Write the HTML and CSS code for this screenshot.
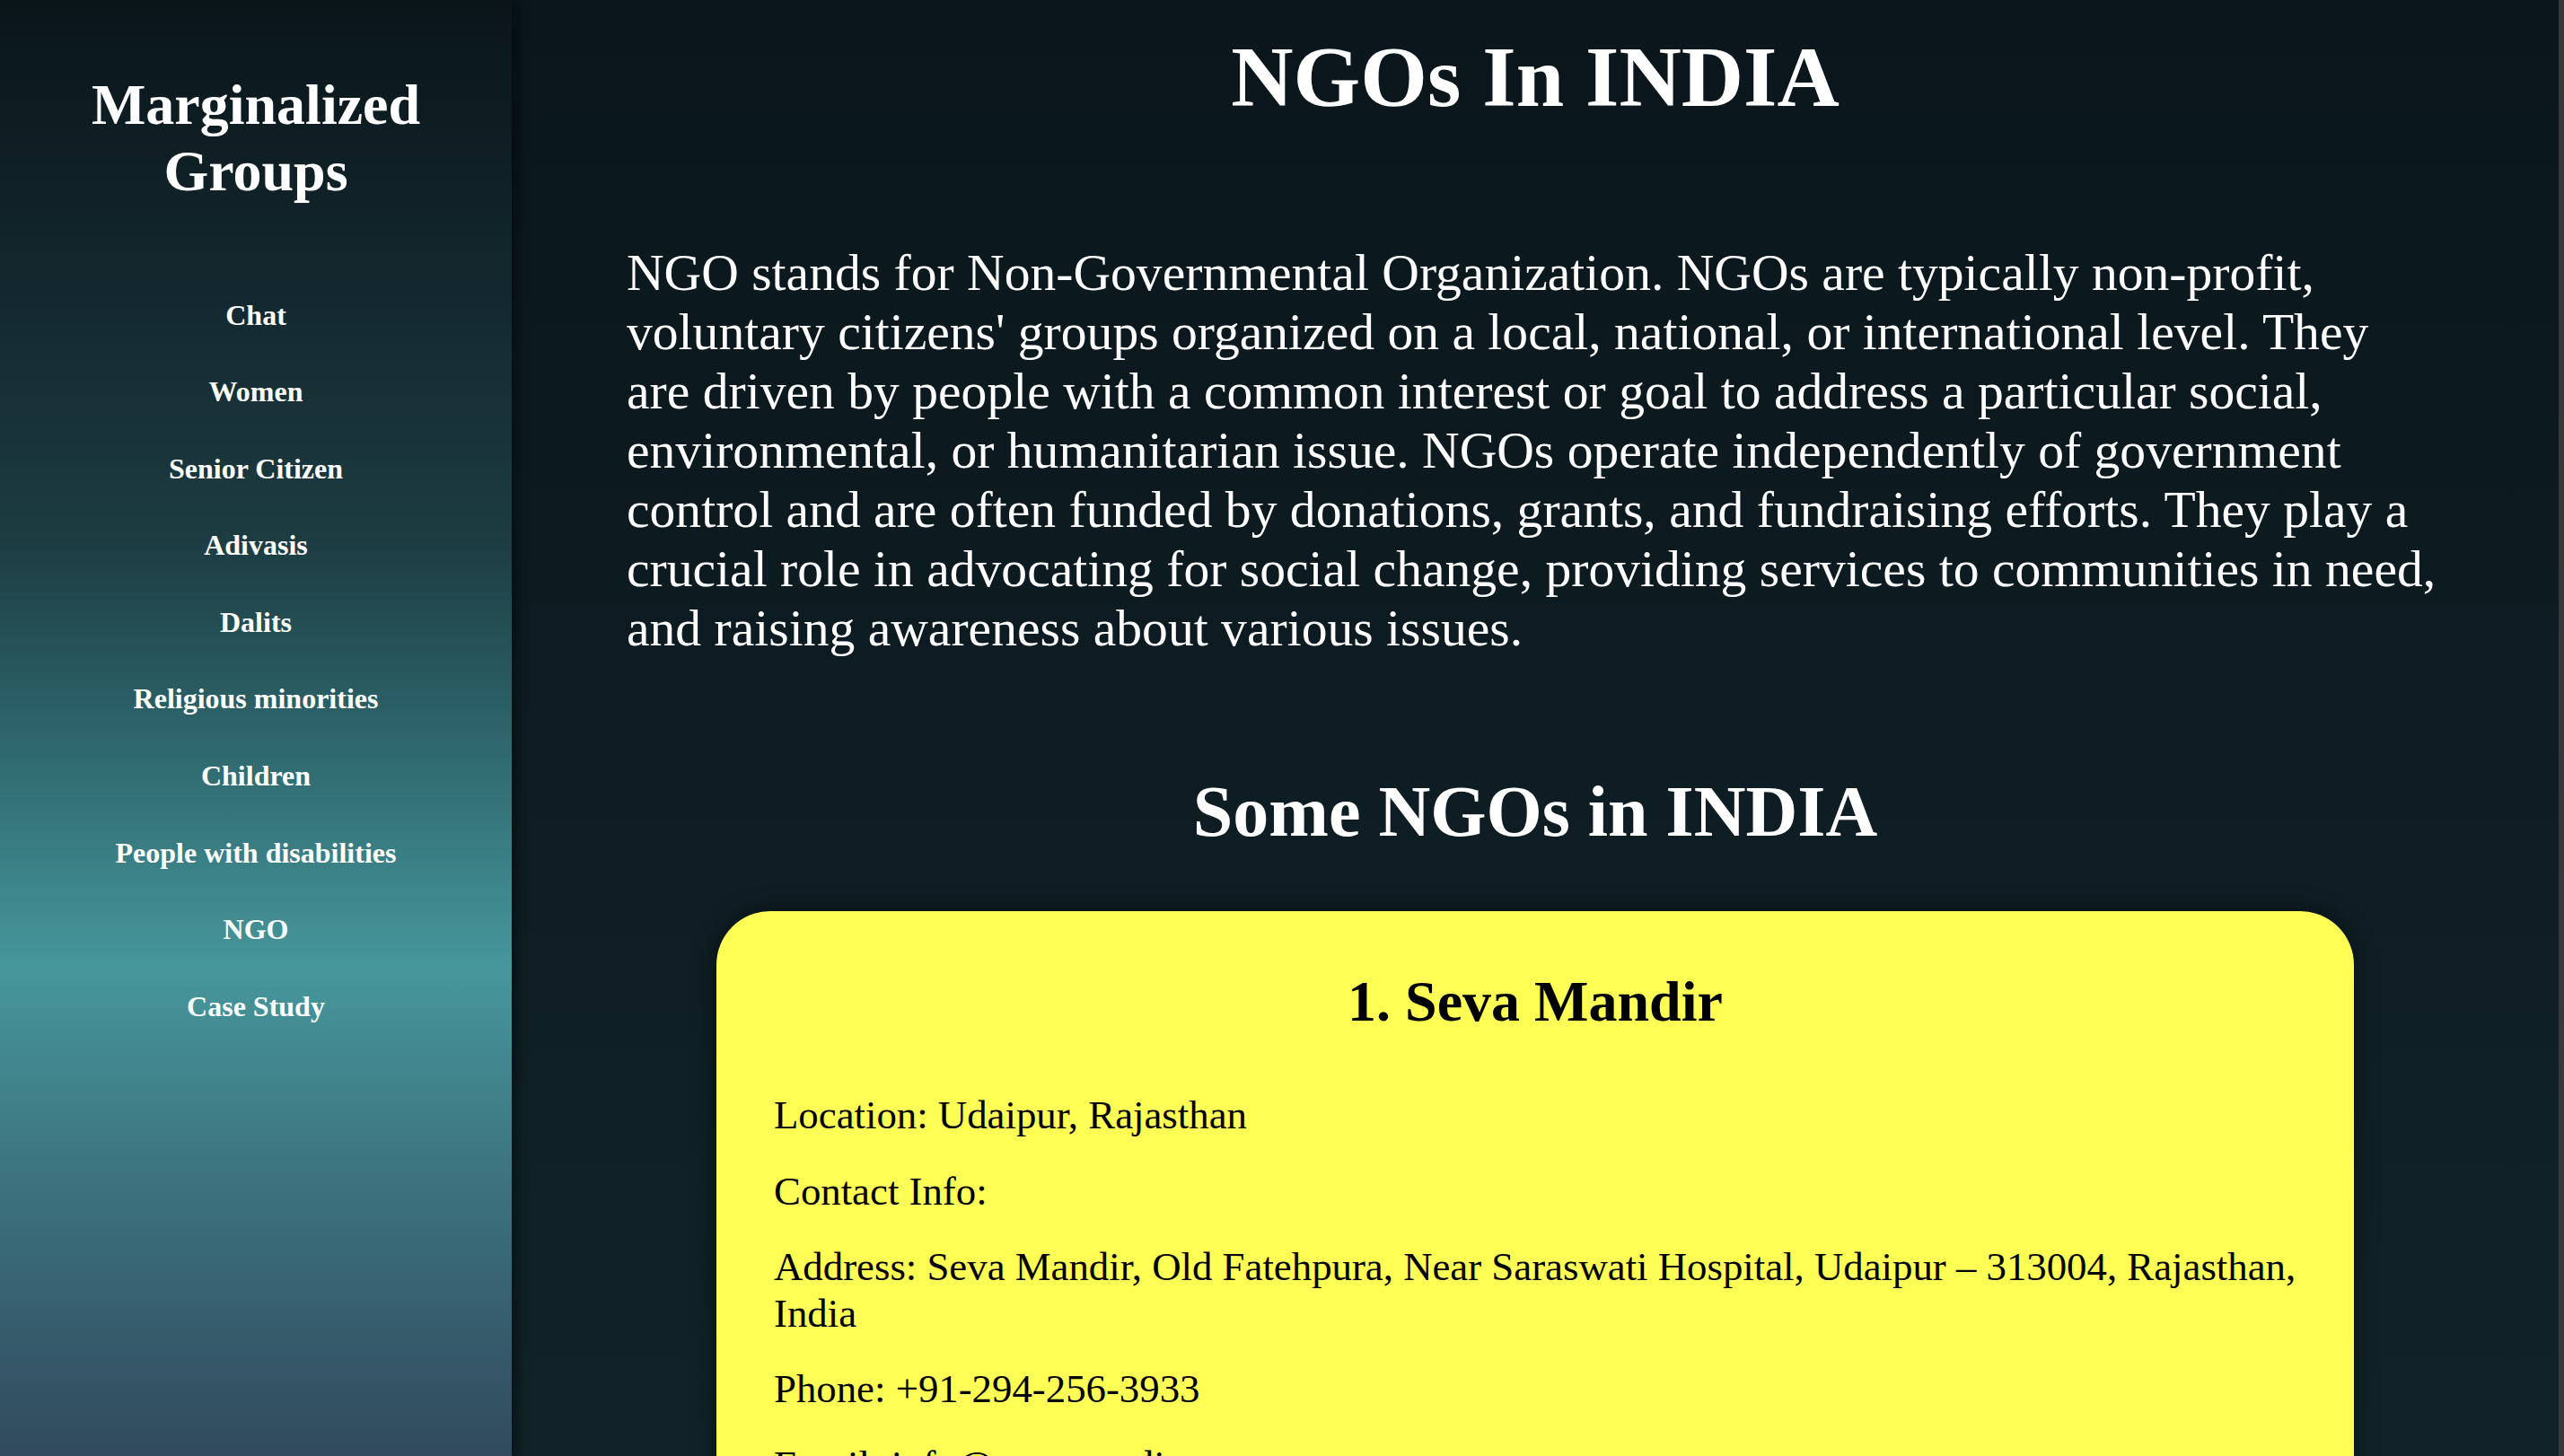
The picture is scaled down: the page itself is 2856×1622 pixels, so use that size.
FILE: index.html
```html
<!DOCTYPE html>
<html lang="en">
<head>
<meta charset="utf-8">
<title>NGOs In INDIA</title>
<link rel="stylesheet" href="styles.css">
</head>
<body>
<div class="page">
  <aside class="sidebar">
    <h1 class="brand">Marginalized Groups</h1>
    <ul class="nav">
      <li><a href="#">Chat</a></li>
      <li><a href="#">Women</a></li>
      <li><a href="#">Senior Citizen</a></li>
      <li><a href="#">Adivasis</a></li>
      <li><a href="#">Dalits</a></li>
      <li><a href="#">Religious minorities</a></li>
      <li><a href="#">Children</a></li>
      <li><a href="#">People with disabilities</a></li>
      <li><a href="#">NGO</a></li>
      <li><a href="#">Case Study</a></li>
    </ul>
  </aside>
  <main class="main">
    <h1 class="title">NGOs In INDIA</h1>
    <p class="intro">NGO stands for Non-Governmental Organization. NGOs are typically non-profit, voluntary citizens' groups organized on a local, national, or international level. They are driven by people with a common interest or goal to address a particular social, environmental, or humanitarian issue. NGOs operate independently of government control and are often funded by donations, grants, and fundraising efforts. They play a crucial role in advocating for social change, providing services to communities in need, and raising awareness about various issues.</p>
    <h2 class="subtitle">Some NGOs in INDIA</h2>
    <section class="card">
      <h3 class="card-title">1. Seva Mandir</h3>
      <p>Location: Udaipur, Rajasthan</p>
      <p>Contact Info:</p>
      <p>Address: Seva Mandir, Old Fatehpura, Near Saraswati Hospital, Udaipur – 313004, Rajasthan, India</p>
      <p>Phone: +91-294-256-3933</p>
      <p>Email: info@sevamandir.org</p>
      <p>Website: www.sevamandir.org</p>
    </section>
  </main>
  <div class="edge"></div>
</div>
</body>
</html>
```
FILE: styles.css
```css
html, body {
  margin: 0;
  padding: 0;
  height: 100%;
  overflow: hidden;
}

body {
  font-family: "Liberation Serif", "Times New Roman", serif;
  background: #0b171c;
  color: #fff;
}

.page {
  display: flex;
  height: 100vh;
}

.sidebar {
  width: 570px;
  flex: 0 0 570px;
  background: linear-gradient(to bottom, #0a151a 0%, #13282e 20%, #1c3c42 37%, #2f6a70 52%, #46979c 66.5%, #3d7580 80%, #314a5e 100%);
  box-shadow: 6px 0 12px rgba(0, 0, 0, 0.45);
  position: relative;
  z-index: 1;
  text-align: center;
}

.brand {
  font-size: 64px;
  font-weight: bold;
  line-height: 1.15;
  margin: 80px 40px 0;
}

.nav {
  list-style: none;
  margin: 81px 0 0;
  padding: 0;
}

.nav li {
  padding: 24.4px 0;
  font-size: 32px;
  line-height: 1.15;
}

.nav a {
  color: #fff;
  font-weight: bold;
  text-decoration: none;
}

.main {
  flex: 1;
  background: linear-gradient(to bottom, #0a161b 0%, #0e1e24 60%, #112329 100%);
  overflow: hidden;
}

.title {
  font-size: 96px;
  font-weight: bold;
  line-height: 1.15;
  text-align: center;
  margin: 31px 0 130px;
}

.intro {
  font-size: 57.6px;
  line-height: 65.9px;
  margin: 0 128px 125px;
}

.subtitle {
  font-size: 80px;
  font-weight: bold;
  line-height: 1.15;
  text-align: center;
  margin: 0 0 65px;
}

.card {
  width: 80%;
  box-sizing: border-box;
  margin: 0 auto;
  background: #ffff55;
  color: #000;
  border-radius: 60px;
  padding: 64px 64px 0;
  box-shadow: 0 0 24px rgba(0, 0, 0, 0.55);
}

.card-title {
  font-size: 64px;
  font-weight: bold;
  line-height: 1.15;
  text-align: center;
  margin: 0 0 65px;
}

.card p {
  font-size: 44.8px;
  line-height: 1.15;
  margin: 33px 0;
}

.edge {
  width: 6px;
  flex: 0 0 6px;
  background: #383838;
}
```
